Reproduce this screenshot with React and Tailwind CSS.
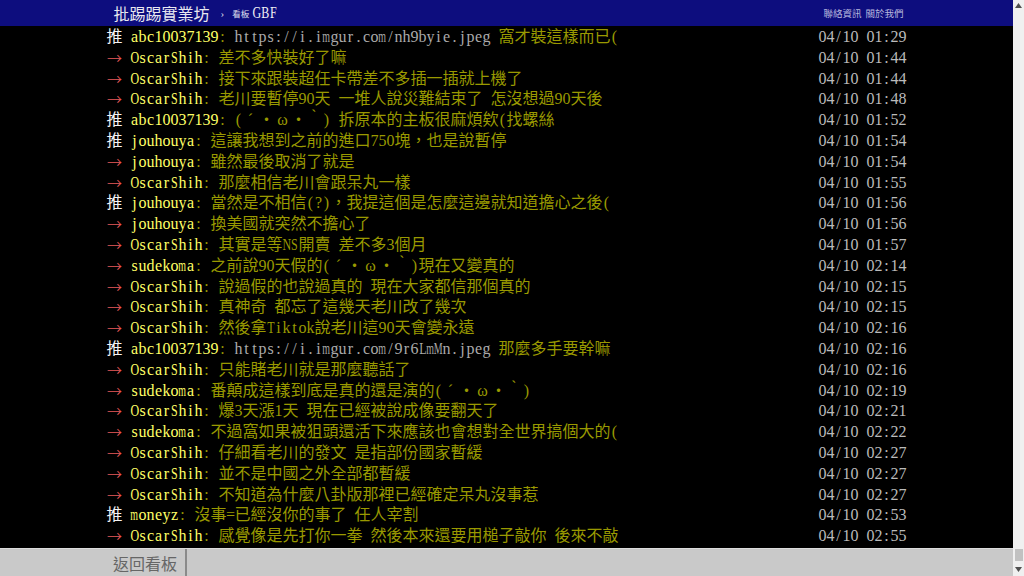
import React from 'react';

// PTT-style push list: every ascii char is a half-width cell (8px), the rest full-width (16px)

const rows = [
  ['推', 'abc10037139', [{ link: 'https://i.imgur.com/nh9byie.jpeg' }, ' 窩才裝這樣而已('], '04/10 01:29'],
  ['→', 'OscarShih', ['差不多快裝好了嘛'], '04/10 01:44'],
  ['→', 'OscarShih', ['接下來跟裝超任卡帶差不多插一插就上機了'], '04/10 01:44'],
  ['→', 'OscarShih', ['老川要暫停90天 一堆人說災難結束了 怎沒想過90天後'], '04/10 01:48'],
  ['推', 'abc10037139', ['(´・ω・｀) 拆原本的主板很麻煩欸(找螺絲'], '04/10 01:52'],
  ['推', 'jouhouya', ['這讓我想到之前的進口750塊，也是說暫停'], '04/10 01:54'],
  ['→', 'jouhouya', ['雖然最後取消了就是'], '04/10 01:54'],
  ['→', 'OscarShih', ['那麼相信老川會跟呆丸一樣'], '04/10 01:55'],
  ['推', 'jouhouya', ['當然是不相信(?)，我提這個是怎麼這邊就知道擔心之後('], '04/10 01:56'],
  ['→', 'jouhouya', ['換美國就突然不擔心了'], '04/10 01:56'],
  ['→', 'OscarShih', ['其實是等NS開賣 差不多3個月'], '04/10 01:57'],
  ['→', 'sudekoma', ['之前說90天假的(´・ω・｀)現在又變真的'], '04/10 02:14'],
  ['→', 'OscarShih', ['說過假的也說過真的 現在大家都信那個真的'], '04/10 02:15'],
  ['→', 'OscarShih', ['真神奇 都忘了這幾天老川改了幾次'], '04/10 02:15'],
  ['→', 'OscarShih', ['然後拿Tiktok說老川這90天會變永遠'], '04/10 02:16'],
  ['推', 'abc10037139', [{ link: 'https://i.imgur.com/9r6LmMn.jpeg' }, ' 那麼多手要幹嘛'], '04/10 02:16'],
  ['→', 'OscarShih', ['只能賭老川就是那麼聽話了'], '04/10 02:16'],
  ['→', 'sudekoma', ['番顛成這樣到底是真的還是演的(´・ω・｀)'], '04/10 02:19'],
  ['→', 'OscarShih', ['爆3天漲1天 現在已經被說成像要翻天了'], '04/10 02:21'],
  ['→', 'sudekoma', ['不過窩如果被狙頭還活下來應該也會想對全世界搞個大的('], '04/10 02:22'],
  ['→', 'OscarShih', ['仔細看老川的發文 是指部份國家暫緩'], '04/10 02:27'],
  ['→', 'OscarShih', ['並不是中國之外全部都暫緩'], '04/10 02:27'],
  ['→', 'OscarShih', ['不知道為什麼八卦版那裡已經確定呆丸沒事惹'], '04/10 02:27'],
  ['推', 'moneyz', ['沒事=已經沒你的事了 任人宰割'], '04/10 02:53'],
  ['→', 'OscarShih', ['感覺像是先打你一拳 然後本來還要用槌子敲你 後來不敲'], '04/10 02:55'],
];

// narrow the wide serif glyphs so they fit an 8px cell
const squeezeClass = (c) => {
  if ('MWm'.includes(c)) return 'scale-x-[0.62]';
  if ('w@%'.includes(c)) return 'scale-x-[0.72]';
  if (c >= 'A' && c <= 'Z') return 'scale-x-[0.75]';
  return null;
};

function Cells({ text }) {
  return Array.from(text).map((c, i) => {
    const wide = c.charCodeAt(0) > 0x7f;
    const sq = squeezeClass(c);
    return (
      <span
        key={i}
        className={`inline-flex justify-center whitespace-pre ${wide ? 'w-4' : 'w-2'}`}
      >
        {sq ? <span className={`inline-block shrink-0 ${sq}`}>{c}</span> : c}
      </span>
    );
  });
}

function PushRow({ tag, user, content, time }) {
  return (
    <div className="flex h-[20.8px] leading-[20.8px]">
      {tag === '推' ? (
        <span className="text-[#f4f4f4]">
          <Cells text="推 " />
        </span>
      ) : (
        <span className="flex w-6 shrink-0">
          <span className="flex w-4 justify-center overflow-hidden text-[15px] text-[#e85a5a] font-['Noto_Sans_CJK_TC',sans-serif] font-light">
            →
          </span>
        </span>
      )}
      <span className="text-[#ff6]">
        <Cells text={user} />
      </span>
      <span className="text-[#990]">
        <Cells text=": " />
        {content.map((part, i) =>
          typeof part === 'string' ? (
            <Cells key={i} text={part} />
          ) : (
            <span key={i} className="text-[#aaa] underline decoration-1 underline-offset-2">
              <Cells text={part.link} />
            </span>
          )
        )}
      </span>
      <span className="ml-auto text-[#bbb]">
        <Cells text={time} />
      </span>
    </div>
  );
}

export default function App() {
  return (
    <div className="flex h-[576px] w-[1024px] overflow-hidden bg-black font-['Liberation_Serif','Noto_Sans_CJK_TC',serif] text-[16px]">
      <div className="flex min-w-0 flex-1 flex-col">
        {/* ── Top bar ── */}
        <div className="h-[26px] shrink-0 bg-[#0d0d7e]">
          <div className="mx-auto flex h-full w-[800px] items-center pl-[7px] pr-[3px]">
            <span className="text-[16px] text-[#e8e8f0] font-['Noto_Sans_CJK_TC',sans-serif] leading-none">批踢踢實業坊</span>
            <span className="ml-[11px] text-[11px] text-[#d0d0e0]">›</span>
            <span className="ml-[8px] text-[8.5px] text-[#e0e0ee] font-['Noto_Sans_CJK_TC',sans-serif]">看板</span>
            <span className="ml-[4px] text-[#f0f0f6] leading-none">
              <Cells text="GBF" />
            </span>
            <div className="ml-auto flex gap-[4px] text-[9.5px] text-[#b8b8de] font-['Noto_Sans_CJK_TC',sans-serif]">
              <span>聯絡資訊</span>
              <span>關於我們</span>
            </div>
          </div>
        </div>

        {/* ── Push list ── */}
        <div className="min-h-0 flex-1 overflow-hidden">
          <div className="mx-auto w-[800px] pt-[1px]">
            {rows.map(([tag, user, content, time], i) => (
              <PushRow key={i} tag={tag} user={user} content={content} time={time} />
            ))}
          </div>
        </div>

        {/* ── Bottom bar ── */}
        <div className="flex h-[28px] shrink-0 border-t border-[#dcdcdc] bg-[#c9c9c9]">
          <div className="flex w-[185px] items-center justify-end pr-[8px] text-[16px] text-[#666] font-['Noto_Sans_CJK_TC',sans-serif]">
            返回看板
          </div>
          <div className="w-[2px] bg-[#8a8a8a]" />
        </div>
      </div>

      {/* ── Scrollbar ── */}
      <div className="flex w-[11px] shrink-0 flex-col items-center bg-[#f0f0f0]">
        <svg className="mt-[3px] h-[5px] w-[7px]" viewBox="0 0 7 5">
          <path d="M3.5 0 L7 5 L0 5 Z" fill="#505050" />
        </svg>
        <div className="flex-1" />
        <div className="mb-[6px] h-[12px] w-[8px] bg-[#c1c1c1]" />
        <svg className="mb-[4px] h-[5px] w-[7px]" viewBox="0 0 7 5">
          <path d="M0 0 L7 0 L3.5 5 Z" fill="#505050" />
        </svg>
      </div>
    </div>
  );
}
